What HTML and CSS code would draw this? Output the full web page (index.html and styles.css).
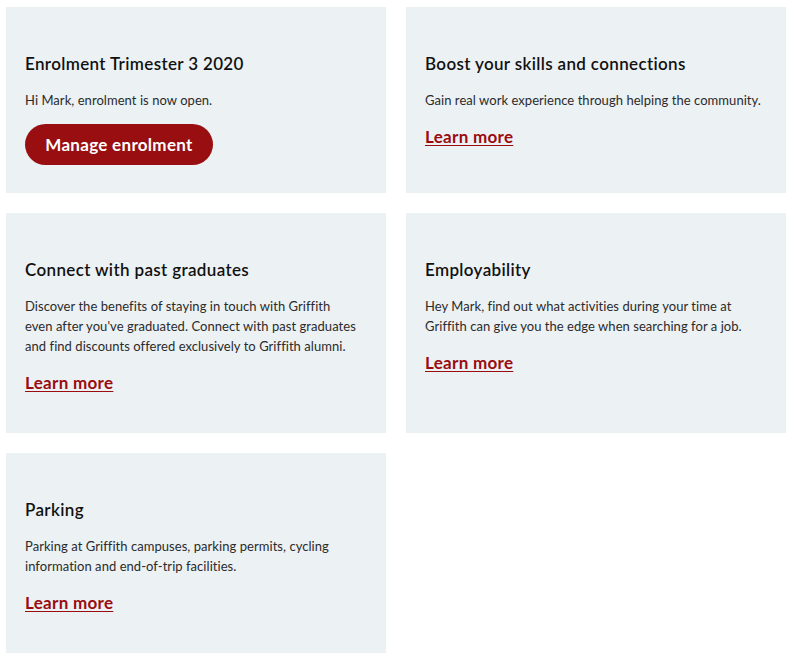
FILE: index.html
```html
<!DOCTYPE html>
<html lang="en">
<head>
<meta charset="utf-8">
<title>Cards</title>
<link rel="stylesheet" href="styles.css">
</head>
<body>
<div class="grid">
  <section class="card">
    <h2 class="card-title">Enrolment Trimester 3 2020</h2>
    <p class="card-text">Hi Mark, enrolment is now open.</p>
    <a class="btn" href="#">Manage enrolment</a>
  </section>
  <section class="card">
    <h2 class="card-title">Boost your skills and connections</h2>
    <p class="card-text">Gain real work experience through helping the community.</p>
    <a class="card-link" href="#">Learn more</a>
  </section>
  <section class="card">
    <h2 class="card-title">Connect with past graduates</h2>
    <p class="card-text">Discover the benefits of staying in touch with Griffith<br>even after you've graduated. Connect with past graduates<br>and find discounts offered exclusively to Griffith alumni.</p>
    <a class="card-link" href="#">Learn more</a>
  </section>
  <section class="card">
    <h2 class="card-title">Employability</h2>
    <p class="card-text">Hey Mark, find out what activities during your time at<br>Griffith can give you the edge when searching for a job.</p>
    <a class="card-link" href="#">Learn more</a>
  </section>
  <section class="card">
    <h2 class="card-title">Parking</h2>
    <p class="card-text">Parking at Griffith campuses, parking permits, cycling<br>information and end-of-trip facilities.</p>
    <a class="card-link" href="#">Learn more</a>
  </section>
</div>
</body>
</html>
```
FILE: styles.css
```css
html, body {
  margin: 0;
  padding: 0;
  background: #ffffff;
}
body {
  padding: 7px 8px 0 6px;
  font-family: Lato, "Open Sans", Arial, sans-serif;
}
.grid {
  display: grid;
  grid-template-columns: 380px 380px;
  column-gap: 20px;
  row-gap: 20px;
  align-items: stretch;
}
.card {
  background: #ecf1f4;
  padding: 45px 19px 28px 19px;
  display: flex;
  flex-direction: column;
  align-items: flex-start;
}
.card-title {
  margin: 0;
  font-size: 17px;
  line-height: 24px;
  font-weight: 600;
  color: #111111;
  letter-spacing: 0.35px;
}
.card-text {
  margin: 14px 0 0 0;
  font-size: 13px;
  line-height: 20px;
  color: #2b2b2b;
  letter-spacing: 0.05px;
}
.btn {
  margin-top: 14px;
  display: inline-flex;
  align-items: center;
  justify-content: center;
  height: 41px;
  width: 188px;
  border-radius: 21px;
  background: #990e10;
  color: #ffffff;
  font-size: 17px;
  font-weight: 700;
  letter-spacing: 0.3px;
  text-decoration: none;
}
.card-link {
  margin: 15px 0 10px 0;
  font-size: 17px;
  line-height: 24px;
  font-weight: 700;
  color: #9b0c10;
  letter-spacing: 0.3px;
  text-decoration: underline;
  text-underline-offset: 2px;
}
```
